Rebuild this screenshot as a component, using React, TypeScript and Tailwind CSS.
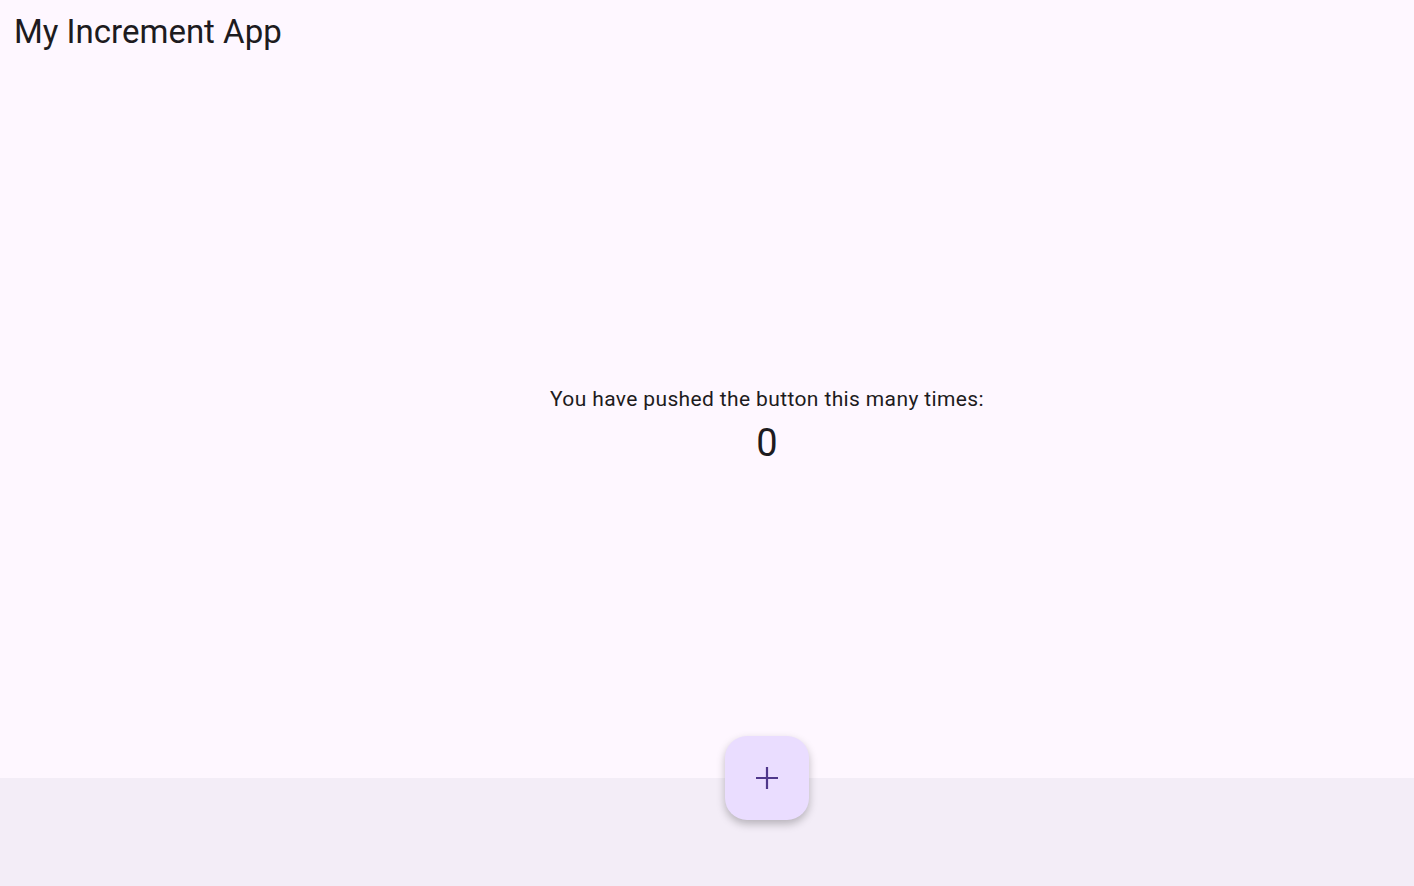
import React, { useState } from "react";

export default function App() {
  const [count, setCount] = useState(0);

  return (
    <div
      className="relative flex h-[886px] w-full flex-col overflow-hidden bg-[#fef7ff] text-[#1d1b20]"
      style={{ fontFamily: "Roboto, 'Noto Sans', sans-serif" }}
    >
      {/* App bar */}
      <header className="flex h-[62px] items-center px-[14px]">
        <h1 className="text-[33px] leading-none font-normal">My Increment App</h1>
      </header>

      {/* Body */}
      <main className="flex flex-1 flex-col items-center justify-center pl-[120px] pt-[12px]">
        <p className="text-[21px] leading-[28px] tracking-[0.37px]">
          You have pushed the button this many times:
        </p>
        <p className="mt-[6px] text-[38px] leading-[48px]">{count}</p>
      </main>

      {/* Bottom bar */}
      <footer className="relative h-[108px] bg-[#f3edf7]">
        <div className="absolute -top-[42px] left-0 right-0 flex justify-center pl-[120px]">
          <button
            onClick={() => setCount((c) => c + 1)}
            className="flex h-[84px] w-[84px] items-center justify-center rounded-[22px] bg-[#eaddff] text-[#4f378b] shadow-[0_4px_8px_rgba(0,0,0,0.25)]"
            aria-label="Increment"
          >
            <svg width="24" height="24" viewBox="0 0 24 24">
              <path d="M12 1v22M1 12h22" stroke="currentColor" strokeWidth="2.2" />
            </svg>
          </button>
        </div>
      </footer>
    </div>
  );
}
